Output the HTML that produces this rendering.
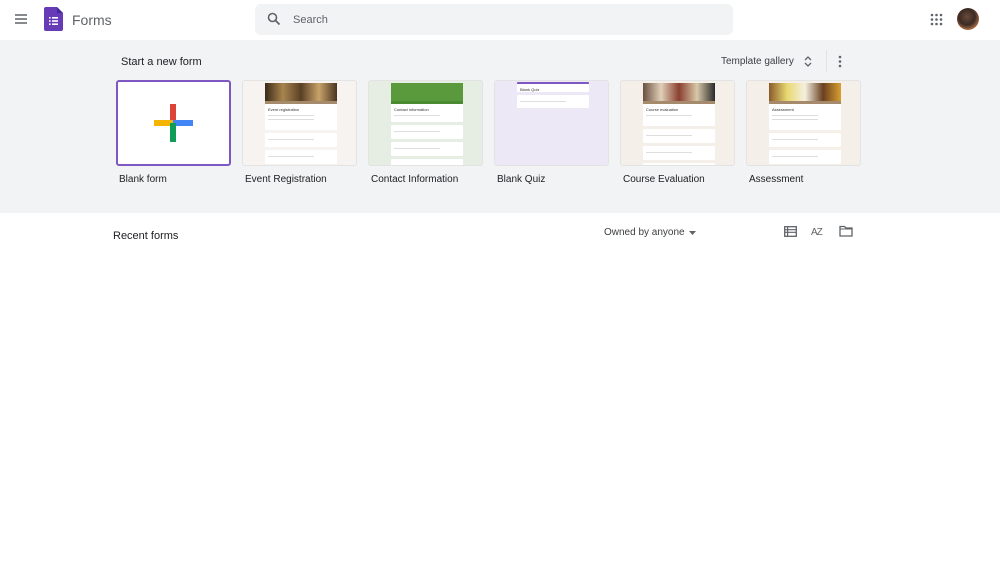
<!DOCTYPE html>
<html><head><meta charset="utf-8"><style>
*{box-sizing:border-box;margin:0;padding:0}
body{width:1000px;height:563px;overflow:hidden;background:#fff;font-family:"Liberation Sans",Arial,sans-serif;color:#202124;position:relative}
.hdr{position:absolute;left:0;top:0;width:1000px;height:40px;background:#fff}
.band{position:absolute;left:0;top:40px;width:1000px;height:173px;background:#f1f3f4}
.abs{position:absolute}
.card{position:absolute;top:80px;width:115px;height:86px;border:1px solid #e3e3e3;border-radius:3px;overflow:hidden}
.lbl{position:absolute;top:174px;font-size:10px;color:#202124}
.f{position:absolute;left:22px;width:72px;top:2px;bottom:0}
.img{height:18px}
.strip{height:3px;background:#a58a6c}
.box{background:#fff;margin-bottom:3px;border-radius:1px;padding:3px 3px}
.ln{height:1px;background:#ddd;margin:3px 0;width:70%}
.t{font-size:4px;color:#333}
</style></head><body>
<div class="hdr">
 <svg class="abs" style="left:14px;top:13px" width="14" height="12" viewBox="0 0 14 12"><path d="M1 2h12M1 6h12M1 10h12" stroke="#5f6368" stroke-width="1.4"/></svg>
 <svg class="abs" style="left:44px;top:7px" width="19" height="24" viewBox="0 0 19 24"><path d="M2 0h11l6 6v16a2 2 0 0 1-2 2H2a2 2 0 0 1-2-2V2a2 2 0 0 1 2-2z" fill="#673ab7"/><path d="M13 0v6h6z" fill="#4527a0"/><g fill="#fff"><rect x="5" y="10" width="1.6" height="1.6"/><rect x="5" y="13.2" width="1.6" height="1.6"/><rect x="5" y="16.4" width="1.6" height="1.6"/><rect x="8" y="10" width="6" height="1.6"/><rect x="8" y="13.2" width="6" height="1.6"/><rect x="8" y="16.4" width="6" height="1.6"/></g></svg>
 <div class="abs" style="left:72px;top:12px;font-size:14px;color:#5f6368">Forms</div>
 <div class="abs" style="left:255px;top:4px;width:478px;height:31px;background:#f1f3f4;border-radius:6px"></div>
 <svg class="abs" style="left:267px;top:12px" width="14" height="14" viewBox="0 0 14 14"><circle cx="5.5" cy="5.5" r="4" stroke="#5f6368" stroke-width="1.6" fill="none"/><path d="M8.5 8.5l4 4" stroke="#5f6368" stroke-width="1.8"/></svg>
 <div class="abs" style="left:293px;top:14px;font-size:11px;color:#5f6368">Search</div>
 <svg class="abs" style="left:930px;top:13px" width="13" height="13" viewBox="0 0 13 13" fill="#5f6368"><circle cx="2" cy="2" r="1.3"/><circle cx="6.5" cy="2" r="1.3"/><circle cx="11" cy="2" r="1.3"/><circle cx="2" cy="6.5" r="1.3"/><circle cx="6.5" cy="6.5" r="1.3"/><circle cx="11" cy="6.5" r="1.3"/><circle cx="2" cy="11" r="1.3"/><circle cx="6.5" cy="11" r="1.3"/><circle cx="11" cy="11" r="1.3"/></svg>
 <div class="abs" style="left:957px;top:8px;width:22px;height:22px;border-radius:50%;background:radial-gradient(circle at 45% 40%,#6b4a3a 0,#3a2a24 45%,#c87a4a 80%,#e0643a 100%)"></div>
</div>
<div class="band"></div>
<div class="abs" style="left:121px;top:56px;font-size:11px">Start a new form</div>
<div class="abs" style="left:721px;top:56px;font-size:10px;color:#3c4043">Template gallery</div>
<svg class="abs" style="left:804px;top:55px" width="8" height="13" viewBox="0 0 8 13"><path d="M1 5l3-3 3 3M1 8l3 3 3-3" stroke="#5f6368" stroke-width="1.3" fill="none"/></svg>
<div class="abs" style="left:826px;top:50px;width:1px;height:22px;background:#e3e3e3"></div>
<svg class="abs" style="left:838px;top:55px" width="4" height="13" viewBox="0 0 4 13" fill="#5f6368"><circle cx="2" cy="2" r="1.3"/><circle cx="2" cy="6.5" r="1.3"/><circle cx="2" cy="11" r="1.3"/></svg>

<div class="card" style="left:116px;width:115px;background:#fff;border:2px solid #7e57c2"></div>
<svg class="abs" style="left:154px;top:104px" width="39" height="38" viewBox="0 0 39 38"><rect x="16" y="0" width="6" height="19" fill="#db4437"/><rect x="0" y="16" width="19" height="6" fill="#f4b400"/><rect x="19" y="16" width="20" height="6" fill="#4285f4"/><rect x="16" y="19" width="6" height="19" fill="#0f9d58"/></svg>
<div class="lbl" style="left:119px">Blank form</div>

<div class="card" style="left:242px;background:#f6f3f1"><div class="f"><div class="img" style="background:linear-gradient(90deg,#3b2a18,#a8844f,#5a4024,#c7a26a,#4a3420)"></div><div class="strip"></div><div class="box" style="height:26px"><div class="t">Event registration</div><div class="ln"></div><div class="ln"></div></div><div class="box" style="height:14px"><div class="ln"></div></div><div class="box" style="height:14px"><div class="ln"></div></div><div class="box" style="height:10px"></div></div></div>
<div class="lbl" style="left:245px">Event Registration</div>

<div class="card" style="left:368px;background:#e6ede3"><div class="f"><div class="img" style="background:#5a9a3c"></div><div class="strip" style="background:#4a8a30"></div><div class="box" style="height:18px"><div class="t">Contact information</div><div class="ln"></div></div><div class="box" style="height:14px"><div class="ln"></div></div><div class="box" style="height:14px"><div class="ln"></div></div><div class="box" style="height:14px"><div class="ln"></div></div></div></div>
<div class="lbl" style="left:371px">Contact Information</div>

<div class="card" style="left:494px;background:#ede8f5"><div class="f" style="top:1px"><div class="box" style="height:10px;border-top:2px solid #7e57c2"><div class="t">Blank Quiz</div></div><div class="box" style="height:13px"><div class="ln"></div></div></div></div>
<div class="lbl" style="left:497px">Blank Quiz</div>

<div class="card" style="left:620px;background:#f5efea"><div class="f"><div class="img" style="background:linear-gradient(90deg,#6a5040,#e0d0b8,#8a4030,#d8c8a8,#2a2a2a)"></div><div class="strip"></div><div class="box" style="height:22px"><div class="t">Course evaluation</div><div class="ln"></div></div><div class="box" style="height:14px"><div class="ln"></div></div><div class="box" style="height:14px"><div class="ln"></div></div><div class="box" style="height:10px"></div></div></div>
<div class="lbl" style="left:623px">Course Evaluation</div>

<div class="card" style="left:746px;background:#f5efea"><div class="f"><div class="img" style="background:linear-gradient(90deg,#8a5a2a,#e8d870,#f4f0e0,#6a4020,#d8a030)"></div><div class="strip"></div><div class="box" style="height:26px"><div class="t">Assessment</div><div class="ln"></div><div class="ln"></div></div><div class="box" style="height:14px"><div class="ln"></div></div><div class="box" style="height:14px"><div class="ln"></div></div><div class="box" style="height:10px"></div></div></div>
<div class="lbl" style="left:749px">Assessment</div>

<div class="abs" style="left:113px;top:230px;font-size:11px">Recent forms</div>
<div class="abs" style="left:604px;top:227px;font-size:10px;color:#3c4043">Owned by anyone</div>
<svg class="abs" style="left:689px;top:231px" width="8" height="4" viewBox="0 0 8 4"><path d="M0 0h7l-3.5 4z" fill="#5f6368"/></svg>
<svg class="abs" style="left:784px;top:226px" width="13" height="11" viewBox="0 0 13 11"><rect x="0.7" y="0.7" width="11.6" height="9.6" stroke="#5f6368" stroke-width="1.3" fill="none"/><path d="M1 3.7h11M1 6.3h11M3.6 1v9" stroke="#5f6368" stroke-width="1.2"/></svg>
<div class="abs" style="left:811px;top:227px;font-size:10px;color:#5f6368;letter-spacing:-1px">AZ</div>
<svg class="abs" style="left:839px;top:225px" width="14" height="12" viewBox="0 0 14 12"><path d="M1 1.5h4.5l1.5 1.5h6v8H1z" stroke="#5f6368" stroke-width="1.3" fill="none"/><path d="M1 4h12" stroke="#5f6368" stroke-width="1"/></svg>
</body></html>
